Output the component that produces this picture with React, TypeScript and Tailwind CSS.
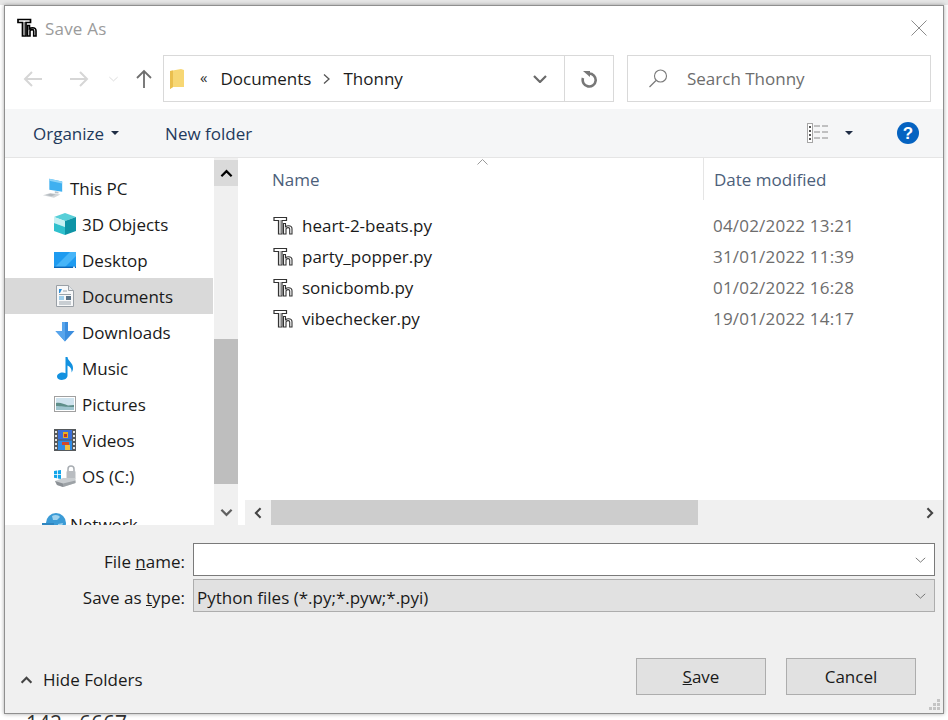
import React from 'react';

const ThonnyIcon = ({ className = '', dark = false }: { className?: string; dark?: boolean }) => (
  <svg viewBox="0 0 20 20" className={className} aria-hidden="true" fill="none">
    {/* outlined T */}
    <path d="M1 1.500h12.500v3H9v13.500H5.500V4.500H1z" fill="#fff" stroke={dark ? '#000' : '#333'} strokeWidth={dark ? 1.7 : 1.2} />
    <path d="M7.200 4v13" stroke={dark ? '#555' : '#999'} strokeWidth="1" />
    {/* outlined h */}
    <path d="M10.500 7.500h2v3.200c1-.8 2-1 3-1 2 0 3.500 1 3.500 3V18h-2.300v-5c0-1-.6-1.400-1.500-1.400-1 0-2.200.6-2.200 1.600V18h-2.500z" fill="#fff" stroke={dark ? '#000' : '#333'} strokeWidth={dark ? 1.6 : 1.1} />
  </svg>
);

const ThisPcIcon = () => (
  <svg viewBox="0 0 24 22" className="w-[24px] h-[22px]" aria-hidden="true">
    <path d="M8 1l14 3v11L8 13z" fill="#3fb0f0" />
    <path d="M8 1l14 3v2L8 3z" fill="#8ed4f8" />
    <path d="M14 14.500l4 .6v2l-4-.4z" fill="#b8c4cc" />
    <path d="M1 19l8-2.500 11 1.500-7 3.500z" fill="#d2d6d9" />
    <path d="M4 18.700l5-1.400 6 .8-4.500 1.800z" fill="#b3b9be" />
  </svg>
);

const CubeIcon = () => (
  <svg viewBox="0 0 22 22" className="w-[22px] h-[22px]" aria-hidden="true">
    <path d="M11 0l11 4-11 4L0 4z" fill="#57cfd8" />
    <path d="M0 4l11 4v6L0 10z" fill="#c6f1f3" />
    <path d="M0 10l11 4v8L0 18z" fill="#2fc0cd" />
    <path d="M22 4L11 8v14l11-4z" fill="#0e94a6" />
  </svg>
);

const DesktopIcon = () => (
  <svg viewBox="0 0 22 16" className="w-[22px] h-[16px]" aria-hidden="true">
    <rect width="22" height="16" fill="#1e9bf0" />
    <path d="M0 16L16 0h6v4L10 16z" fill="#47b5f8" />
    <rect y="14.600" width="22" height="1.400" fill="#0c66b8" />
    <rect x="19" y="14.600" width="2" height="1.400" fill="#dcecf8" />
  </svg>
);

const DocumentsIcon = () => (
  <svg viewBox="0 0 18 22" className="w-[18px] h-[22px]" aria-hidden="true">
    <path d="M.5.5h12l5 5v16H.5z" fill="#f7f8f9" stroke="#9aa0a6" />
    <path d="M12.500.5v5h5" fill="#e6e9ec" stroke="#9aa0a6" />
    <path d="M3 4l3 0-2 4h-1z" fill="#2f8fd8" />
    <path d="M7 6h4M3 9.500h12M3 17h12M3 19h12" stroke="#9aa4ac" strokeWidth="1" />
    <path d="M3 12h5M3 14h5" stroke="#45a3e0" strokeWidth="1.200" />
    <rect x="10" y="11" width="5" height="4" fill="#5c7488" />
  </svg>
);

const DownloadsIcon = () => (
  <svg viewBox="0 0 20 20" className="w-[20px] h-[20px]" aria-hidden="true">
    <path d="M7 0h6v9h6.500L10 19.500.5 9H7z" fill="#3c8ede" />
    <path d="M7 0h3v19.500L.5 9H7z" fill="#58a5ec" />
  </svg>
);

const MusicIcon = () => (
  <svg viewBox="0 0 18 23" className="w-[18px] h-[23px]" aria-hidden="true">
    <path d="M9.500 0h2c.4 4 5.500 5.500 5.500 11 0 2-.6 3.400-1.400 4.400.4-3.400-1.600-6-4.100-7v10.200c0 2.600-2.600 4.400-5.600 4.400C3 23 1 21.600 1 19.600c0-2.400 2.800-4.100 5.500-4.100 1.100 0 2.200.3 3 .8z" fill="#1291e0" />
  </svg>
);

const PicturesIcon = () => (
  <svg viewBox="0 0 22 16" className="w-[22px] h-[16px]" aria-hidden="true">
    <rect x=".5" y=".5" width="21" height="15" fill="#fff" stroke="#a0a0a0" />
    <rect x="2" y="2" width="18" height="12" fill="#cfe3ee" />
    <path d="M2 7c4-1 8 1 12 2.500l6-.5V14H2z" fill="#5f8f8a" />
    <path d="M2 10c5 0 9 1 18 1v3H2z" fill="#9fc5cf" />
  </svg>
);

const VideosIcon = () => (
  <svg viewBox="0 0 22 22" className="w-[22px] h-[22px]" aria-hidden="true">
    <rect width="22" height="22" fill="#55595c" />
    <rect x="4" y="1" width="14" height="9.500" fill="#3b6fd8" />
    <rect x="4" y="11.500" width="14" height="9.500" fill="#2f8ce6" />
    <path d="M9 3h5v6H9z" fill="#e8b020" />
    <path d="M10 5h3v3h-3z" fill="#c4352a" />
    <path d="M8 13h7v3H8z" fill="#d24a2c" />
    <path d="M11 16h5v5h-5z" fill="#eec040" />
    <path d="M1 2h2v2H1zM1 6h2v2H1zM1 10h2v2H1zM1 14h2v2H1zM1 18h2v2H1zM19 2h2v2h-2zM19 6h2v2h-2zM19 10h2v2h-2zM19 14h2v2h-2zM19 18h2v2h-2z" fill="#e4e4e4" />
  </svg>
);

const DriveIcon = () => (
  <svg viewBox="0 0 22 22" className="w-[22px] h-[22px]" aria-hidden="true">
    <path d="M0 6l3-.5V9H0zM3.800 5.400L7 5v4H3.800zM0 9.800h3v3.400l-3-.4zM3.800 9.800H7V14l-3.200-.6z" fill="#12a5ea" />
    <path d="M14 6V4a3 3 0 016 0v2" fill="none" stroke="#a8adb2" strokeWidth="1.500" />
    <rect x="12.500" y="6" width="9" height="8" rx="1" fill="#b9bdc1" />
    <path d="M1 16l8-3h12.500v5L9 22l-6-2z" fill="#c9cdd0" />
    <path d="M1 16l8 2.500V22l-6-2z" fill="#8b9095" />
    <path d="M9 18.500l12.500-3V18L9 22z" fill="#9da2a6" />
  </svg>
);

const NetworkIcon = () => (
  <svg viewBox="0 0 24 24" className="w-[24px] h-[24px]" aria-hidden="true">
    <circle cx="14" cy="11" r="10" fill="#3b9bd6" />
    <path d="M10 4c3-2 7-1 8 1l-3 3-4 0zM16 12l5-1-2 6-3 1z" fill="#9ed2ee" />
    <rect x="0" y="11" width="12" height="9" fill="#2f86c0" />
  </svg>
);

const ChevronUp = ({ className = '' }: { className?: string }) => (
  <svg viewBox="0 0 14 9" className={className} aria-hidden="true">
    <path d="M1.500 7.500L7 2l5.500 5.500" fill="none" stroke="currentColor" strokeWidth="2.400" />
  </svg>
);

const ChevronDownThin = ({ className = '' }: { className?: string }) => (
  <svg viewBox="0 0 12 7" className={className} aria-hidden="true">
    <path d="M.5 1L6 6l5.500-5" fill="none" stroke="currentColor" strokeWidth="1" />
  </svg>
);

const Caret = () => (
  <svg viewBox="0 0 8 4" className="w-[8px] h-[4px] text-[#1f2d45]" aria-hidden="true">
    <path d="M0 0h8L4 4z" fill="currentColor" />
  </svg>
);

const treeItems = [
  { label: 'This PC', icon: <ThisPcIcon />, top: true },
  { label: '3D Objects', icon: <CubeIcon /> },
  { label: 'Desktop', icon: <DesktopIcon /> },
  { label: 'Documents', icon: <DocumentsIcon />, selected: true },
  { label: 'Downloads', icon: <DownloadsIcon /> },
  { label: 'Music', icon: <MusicIcon /> },
  { label: 'Pictures', icon: <PicturesIcon /> },
  { label: 'Videos', icon: <VideosIcon /> },
  { label: 'OS (C:)', icon: <DriveIcon /> },
];

const files = [
  { name: 'heart-2-beats.py', date: '04/02/2022 13:21' },
  { name: 'party_popper.py', date: '31/01/2022 11:39' },
  { name: 'sonicbomb.py', date: '01/02/2022 16:28' },
  { name: 'vibechecker.py', date: '19/01/2022 14:17' },
];

const TreeRow = ({ label, icon, top, selected }: { label: string; icon: React.ReactNode; top?: boolean; selected?: boolean }) => (
  <div className={`h-[36px] flex items-center ${top ? 'pl-[37px]' : 'pl-[49px]'} ${selected ? 'bg-[#d9d9d9]' : ''}`}>
    <div className="w-[28px] flex justify-center pr-[6px] shrink-0">{icon}</div>
    <span className="text-[#1a1a1a]">{label}</span>
  </div>
);

export default function App() {
  return (
    <div className="w-[948px] h-[720px] overflow-hidden bg-white text-[17px] leading-none" style={{ fontFamily: '"Open Sans", sans-serif' }}>
      <div className="h-[5px] bg-[#e6e6e6]" />
      <div className="ml-[4px] w-[940px] h-[709px] border border-[#8f8f8f] bg-white flex flex-col shadow-[0_0_4px_rgba(0,0,0,0.35)] relative">
        {/* Title bar */}
        <div className="h-[44px] flex items-center pl-[12px] pr-[16px] shrink-0">
          <ThonnyIcon className="w-[20px] h-[20px]" dark />
          <span className="ml-[8px] text-[#9b9b9b] tracking-[0.2px]">Save As</span>
          <svg viewBox="0 0 16 16" className="w-[16px] h-[16px] ml-auto text-[#8c8c8c]" aria-hidden="true">
            <path d="M.5.5l15 15M15.500.5l-15 15" stroke="currentColor" strokeWidth="1" />
          </svg>
        </div>

        {/* Navigation */}
        <div className="h-[59px] flex pt-[5px] shrink-0">
          <div className="h-[47px] flex items-center pl-[18px] w-[158px] shrink-0">
            <svg viewBox="0 0 20 16" className="w-[20px] h-[16px] text-[#d6d6d6]" aria-hidden="true">
              <path d="M19 8H2M9 1L2 8l7 7" fill="none" stroke="currentColor" strokeWidth="2" />
            </svg>
            <svg viewBox="0 0 20 16" className="ml-[26px] w-[20px] h-[16px] text-[#d6d6d6]" aria-hidden="true">
              <path d="M1 8h17M11 1l7 7-7 7" fill="none" stroke="currentColor" strokeWidth="2" />
            </svg>
            <ChevronDownThin className="ml-[20px] w-[9px] h-[6px] text-[#d0d0d0]" />
            <svg viewBox="0 0 16 20" className="ml-[18px] w-[16px] h-[20px] text-[#6e6e6e]" aria-hidden="true">
              <path d="M8 19V2M1 9l7-7 7 7" fill="none" stroke="currentColor" strokeWidth="1.800" />
            </svg>
          </div>
          <div className="w-[451px] h-[47px] border border-[#d9d9d9] flex items-center shrink-0">
            <svg viewBox="0 0 15 20" className="ml-[6px] w-[15px] h-[20px]" aria-hidden="true">
              <path d="M0 2l11-2 3 1v17H3l-3 2z" fill="#f7d774" />
              <path d="M0 2l3-.5V18l-3 2z" fill="#eabf4e" />
            </svg>
            <span className="ml-[15px] text-[15px] text-[#333] -mt-[3px]">«</span>
            <span className="ml-[13px] text-[#1c1c1c]">Documents</span>
            <svg viewBox="0 0 7 10" className="ml-[12px] mr-[13px] w-[7px] h-[10px] text-[#555]" aria-hidden="true">
              <path d="M1 .5L6 5 1 9.500" fill="none" stroke="currentColor" strokeWidth="1.300" />
            </svg>
            <span className="text-[#1c1c1c]">Thonny</span>
            <div className="ml-auto flex items-center h-full">
              <svg viewBox="0 0 14 8" className="w-[14px] h-[8px] text-[#6a6a6a] mr-[17px]" aria-hidden="true">
                <path d="M1 1l6 6 6-6" fill="none" stroke="currentColor" strokeWidth="2.200" />
              </svg>
              <div className="w-[49px] h-full border-l border-[#d9d9d9] flex items-center justify-center">
                <svg viewBox="0 0 18 18" className="w-[18px] h-[18px] text-[#777]" aria-hidden="true">
                  <path d="M9 3.500A6.500 6.500 0 1 1 3 8" fill="none" stroke="currentColor" strokeWidth="2.600" />
                  <path d="M3 1h7v6z" fill="currentColor" />
                </svg>
              </div>
            </div>
          </div>
          <div className="ml-[13px] w-[304px] h-[47px] border border-[#d9d9d9] flex items-center pl-[21px] shrink-0">
            <svg viewBox="0 0 19 19" className="w-[19px] h-[19px] text-[#7a7a7a]" aria-hidden="true">
              <circle cx="11.500" cy="7" r="6" fill="none" stroke="currentColor" strokeWidth="1.100" />
              <path d="M7 11.500L.5 18" stroke="currentColor" strokeWidth="1.300" />
            </svg>
            <span className="ml-[19px] text-[#6d6d6d]">Search Thonny</span>
          </div>
        </div>

        {/* Toolbar */}
        <div className="h-[49px] bg-[#f5f6f7] border-b border-[#e5e5e5] flex items-center pl-[28px] pr-[24px] shrink-0 text-[#1f3a5c]">
          <span>Organize</span>
          <div className="ml-[7px]"><Caret /></div>
          <span className="ml-[46px]">New folder</span>
          <svg viewBox="0 0 22 20" className="ml-auto w-[22px] h-[20px]" aria-hidden="true">
            <rect x=".5" y=".5" width="5" height="19" fill="#fff" stroke="#a6a6a6" />
            <path d="M2 3h2v2H2zM2 7h2v2H2zM2 11h2v2H2zM2 15h2v2H2z" fill="#555" />
            <path d="M7 3h6M15 3h6M7 9h6M15 9h6M7 15h6M15 15h6" stroke="#8a8a8a" strokeWidth="1" />
          </svg>
          <div className="ml-[16px]"><Caret /></div>
          <div className="ml-[44px] w-[22px] h-[22px] rounded-full bg-[#0563c1] text-white flex items-center justify-center text-[17px] font-bold" style={{ fontFamily: '"Liberation Sans", sans-serif' }}>?</div>
        </div>

        {/* Tree and file list */}
        <div className="h-[367px] flex shrink-0 overflow-hidden">
          <div className="w-[208px] overflow-hidden pt-[12px] shrink-0">
            {treeItems.map((item) => (
              <TreeRow key={item.label} {...item} />
            ))}
            <div className="h-[36px] mt-[12px] flex items-center pl-[37px]">
              <div className="w-[28px] pr-[6px] shrink-0"><NetworkIcon /></div>
              <span className="text-[#1a1a1a]">Network</span>
            </div>
          </div>
          <div className="w-[24px] ml-[1px] bg-[#f0f0f0] flex flex-col shrink-0">
            <div className="h-[26px] mt-[2px] bg-[#dadada] flex items-center justify-center shrink-0">
              <ChevronUp className="w-[13px] h-[9px] text-black" />
            </div>
            <div className="h-[153px] shrink-0" />
            <div className="h-[145px] bg-[#bebebe] shrink-0" />
            <div className="flex-1 flex items-center justify-center pt-[15px]">
              <ChevronUp className="w-[13px] h-[9px] text-[#606060] rotate-180" />
            </div>
          </div>
          <div className="flex-1 min-w-0 ml-[7px] flex flex-col">
            <div className="flex-1 min-h-0">
              <div className="h-[42px] flex relative">
                <span className="pl-[27px] w-[459px] h-full flex items-center text-[#4c607a] border-r border-[#e5e5e5] shrink-0">Name</span>
                <span className="pl-[10px] h-full flex items-center text-[#4c607a]">Date modified</span>
                <svg viewBox="0 0 11 6" className="absolute left-[232px] top-[1px] w-[11px] h-[6px] text-[#9a9a9a]" aria-hidden="true">
                  <path d="M.5 5.500L5.500.5l5 5" fill="none" stroke="currentColor" strokeWidth="1" />
                </svg>
              </div>
              <div className="pt-[10px]">
                {files.map((f) => (
                  <div key={f.name} className="h-[31px] flex items-center">
                    <div className="pl-[28px] w-[468px] flex items-center shrink-0">
                      <ThonnyIcon className="w-[20px] h-[20px]" />
                      <span className="ml-[9px] text-[#1a1a1a]">{f.name}</span>
                    </div>
                    <span className="text-[#6d6d6d] tracking-[0.2px]">{f.date}</span>
                  </div>
                ))}
              </div>
            </div>
            <div className="h-[25px] bg-[#f0f0f0] flex items-center shrink-0">
              <div className="w-[26px] flex justify-center">
                <ChevronUp className="w-[12px] h-[8px] text-[#444] -rotate-90" />
              </div>
              <div className="w-[427px] h-full bg-[#cdcdcd]" />
              <div className="flex-1 flex justify-end pr-[7px]">
                <ChevronUp className="w-[12px] h-[8px] text-[#444] rotate-90" />
              </div>
            </div>
          </div>
        </div>

        {/* File name, type and buttons */}
        <div className="flex-1 bg-[#f0f0f0] pt-[18px] relative min-h-0">
          <div className="flex items-center h-[33px]">
            <span className="w-[180px] pt-[3px] text-right text-[#1a1a1a] shrink-0">File <span className="underline">n</span>ame:</span>
            <div className="ml-[8px] w-[742px] h-full bg-white border border-[#7a7a7a] flex items-center justify-end pr-[8px]">
              <ChevronDownThin className="w-[11px] h-[6px] text-[#666]" />
            </div>
          </div>
          <div className="flex items-center h-[33px] mt-[3px]">
            <span className="w-[180px] pt-[3px] text-right text-[#1a1a1a] shrink-0">Save as <span className="underline">t</span>ype:</span>
            <div className="ml-[8px] w-[742px] h-full bg-[#e1e1e1] border border-[#adadad] flex items-center pl-[3px] pr-[8px] text-[#1a1a1a]">
              <span className="pt-[3px]">Python files (*.py;*.pyw;*.pyi)</span>
              <ChevronDownThin className="w-[11px] h-[6px] text-[#666] ml-auto" />
            </div>
          </div>
          <div className="flex items-center mt-[46px] pl-[15px] pr-[27px]">
            <ChevronUp className="w-[13px] h-[8px] text-[#444] mt-[6px]" />
            <span className="ml-[10px] mt-[6px] text-[#1a1a1a]">Hide Folders</span>
            <button className="ml-auto w-[130px] h-[37px] bg-[#e1e1e1] border border-[#adadad] text-[#1a1a1a]"><span className="underline">S</span>ave</button>
            <button className="ml-[20px] w-[130px] h-[37px] bg-[#e1e1e1] border border-[#adadad] text-[#1a1a1a]">Cancel</button>
          </div>
          {/* resize grip */}
          <svg viewBox="0 0 12 12" className="absolute right-[2px] bottom-[2px] w-[12px] h-[12px] text-[#c4c4c4]" aria-hidden="true">
            <path d="M8 0h3v3H8zM4 4h3v3H4zM8 4h3v3H8zM0 8h3v3H0zM4 8h3v3H4zM8 8h3v3H8z" fill="currentColor" />
          </svg>
        </div>
      </div>
      <div className="pl-[26px] -mt-[1px] flex gap-[17px] text-[21px] text-[#333]">
        <span>142</span>
        <span>6667</span>
      </div>
    </div>
  );
}
